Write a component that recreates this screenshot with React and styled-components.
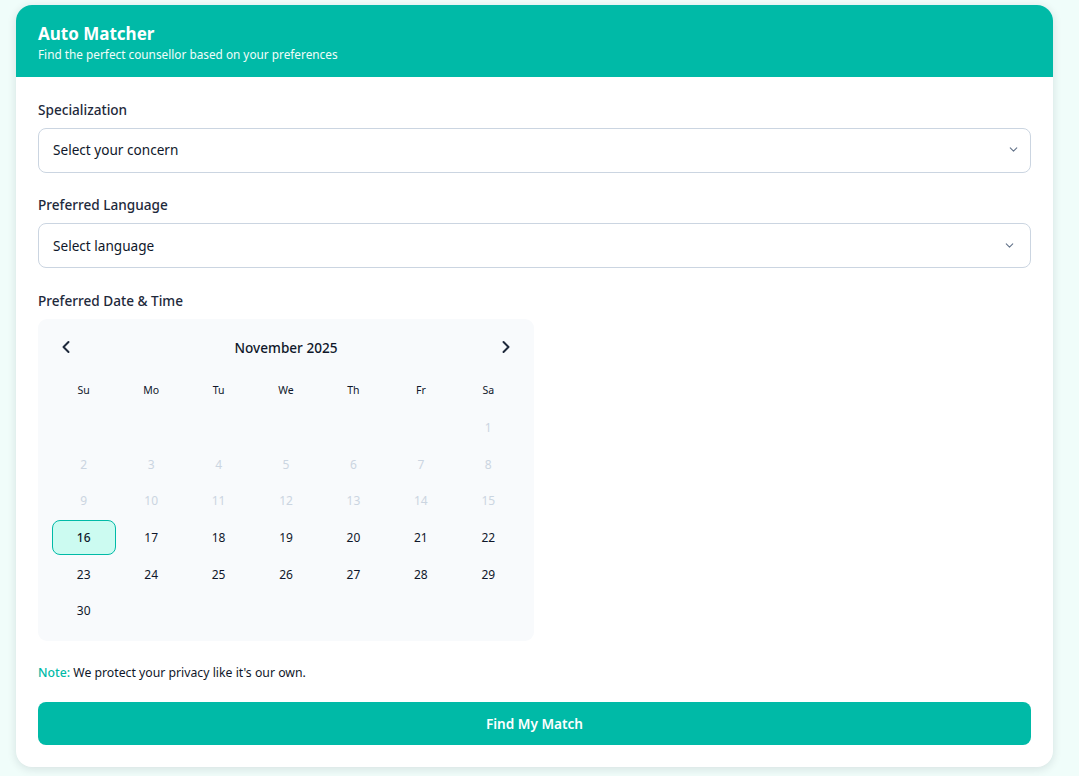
import styled, { createGlobalStyle } from "styled-components";
import { ChevronDown, ChevronLeft, ChevronRight } from "lucide-react";

const GlobalStyle = createGlobalStyle`
    html, body {
        margin: 0;
        padding: 0;
        background: #f0fdfa;
        font-family: "Noto Sans", "Open Sans", sans-serif;
        color: #0f172a;
    }
    * {
        box-sizing: border-box;
    }
`;

const weekDays = ["Su", "Mo", "Tu", "We", "Th", "Fr", "Sa"];
const firstEnabledDay = 16;
const blanks = 6;
const days = Array.from({ length: 30 }, (_, i) => i + 1);

export default function App() {
    return (
        <>
            <GlobalStyle />
            <Card>
                <Header>
                    <Title>Auto Matcher</Title>
                    <Subtitle>Find the perfect counsellor based on your preferences</Subtitle>
                </Header>
                <Form>
                    <Field>
                        <Label>Specialization</Label>
                        <SelectBox $iconGap={10} $bottom={3}>
                            <span>Select your concern</span>
                            <ChevronDown size={13} color="#64748b" />
                        </SelectBox>
                    </Field>
                    <Field $gap={24}>
                        <Label>Preferred Language</Label>
                        <SelectBox $iconGap={14} $bottom={1}>
                            <span>Select language</span>
                            <ChevronDown size={13} color="#64748b" />
                        </SelectBox>
                    </Field>
                    <Field>
                        <Label>Preferred Date &amp; Time</Label>
                        <Calendar>
                            <CalendarTop>
                                <NavButton><ChevronLeft size={20} strokeWidth={2.4} /></NavButton>
                                <Month>November 2025</Month>
                                <NavButton><ChevronRight size={20} strokeWidth={2.4} /></NavButton>
                            </CalendarTop>
                            <WeekRow>
                                {weekDays.map((d) => <WeekDay key={d}>{d}</WeekDay>)}
                            </WeekRow>
                            <DayGrid>
                                {Array.from({ length: blanks }, (_, i) => <span key={i} />)}
                                {days.map((d) => (
                                    <Day key={d} $disabled={d < firstEnabledDay} $selected={d === firstEnabledDay}>
                                        {d}
                                    </Day>
                                ))}
                            </DayGrid>
                        </Calendar>
                    </Field>
                    <Note><NoteLabel>Note:</NoteLabel> We protect your privacy like it's our own.</Note>
                    <SubmitButton>Find My Match</SubmitButton>
                </Form>
            </Card>
        </>
    );
}

const Card = styled.div`
    margin: 5px 26px 9px 16px;
    background: #ffffff;
    border-radius: 16px;
    overflow: hidden;
    box-shadow: 0 2px 10px rgba(15, 23, 42, 0.12);
`;

const Header = styled.div`
    height: 72px;
    padding: 17px 22px 0;
    background: #00baa7;
    color: #ffffff;
`;

const Title = styled.h1`
    margin: 0;
    font-size: 17px;
    line-height: 23px;
    font-weight: 700;
`;

const Subtitle = styled.p`
    margin: 0;
    font-size: 11.8px;
    line-height: 18px;
    color: #f0fdfa;
`;

const Form = styled.div`
    display: flex;
    flex-direction: column;
    padding: 24px 22px 22px;
`;

const Field = styled.div`
    display: flex;
    flex-direction: column;
    margin-bottom: ${(p) => p.$gap || 23}px;
`;

const Label = styled.label`
    margin-bottom: 9px;
    font-size: 13.6px;
    line-height: 18px;
    font-weight: 500;
    color: #1e293b;
`;

const SelectBox = styled.div`
    display: flex;
    align-items: center;
    justify-content: space-between;
    height: 45px;
    padding: 0 ${(p) => p.$iconGap}px ${(p) => p.$bottom}px 14px;
    background: #ffffff;
    border: 1px solid #cbd5e1;
    border-radius: 8px;
    font-size: 13.6px;
`;

const Calendar = styled.div`
    width: 496px;
    height: 322px;
    padding: 8px 12px 0;
    background: #f8fafc;
    border-radius: 9px;
`;

const CalendarTop = styled.div`
    display: flex;
    align-items: center;
    justify-content: space-between;
    height: 40px;
    padding: 0 6px;
`;

const NavButton = styled.span`
    display: flex;
    color: #1e293b;
`;

const Month = styled.div`
    margin-top: 1px;
    font-size: 13.6px;
    font-weight: 500;
    color: #0f172a;
`;

const WeekRow = styled.div`
    display: grid;
    grid-template-columns: repeat(7, 1fr);
    height: 22px;
    margin-top: 12px;
    margin-bottom: 9px;
`;

const WeekDay = styled.div`
    display: flex;
    align-items: center;
    justify-content: center;
    font-size: 10.5px;
    font-weight: 400;
    color: #0f172a;
`;

const DayGrid = styled.div`
    display: grid;
    grid-template-columns: repeat(7, 1fr);
    grid-auto-rows: 36.6px;
`;

const Day = styled.div`
    display: flex;
    align-items: center;
    justify-content: center;
    margin: 0 1.5px 1px;
    font-size: 12px;
    border-radius: 8px;
    color: ${(p) => (p.$disabled ? "#cbd5e1" : "#0f172a")};
    font-weight: ${(p) => (p.$selected ? 500 : 400)};
    background: ${(p) => (p.$selected ? "#ccfbf1" : "transparent")};
    border: 1px solid ${(p) => (p.$selected ? "#00baa7" : "transparent")};
`;

const Note = styled.p`
    margin: 0 0 20px;
    font-size: 12.25px;
    line-height: 18px;
    color: #0f172a;
`;

const NoteLabel = styled.span`
    color: #00baa7;
    font-weight: 500;
`;

const SubmitButton = styled.button`
    height: 43px;
    border: none;
    border-radius: 8px;
    background: #00baa7;
    color: #ffffff;
    font-family: inherit;
    font-size: 13.6px;
    font-weight: 600;
`;
